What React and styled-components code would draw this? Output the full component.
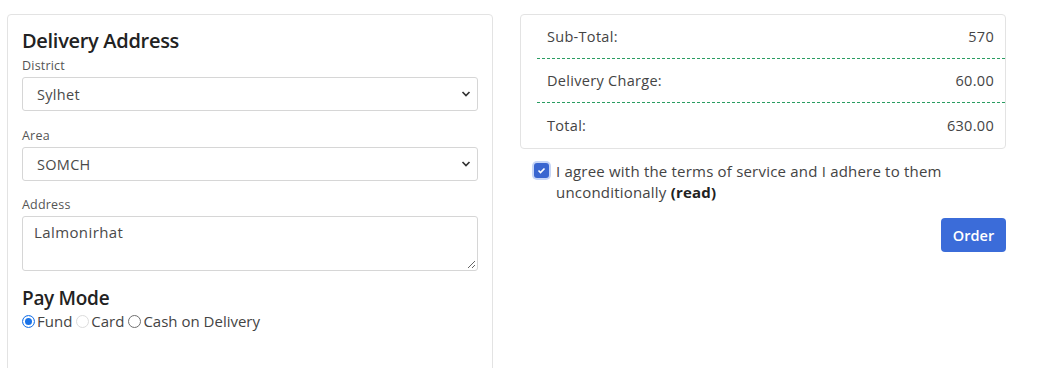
import React from "react";
import styled, { createGlobalStyle } from "styled-components";

const Global = createGlobalStyle`
  html, body { margin: 0; padding: 0; background: #fff; }
  body { font-family: "Open Sans", "Liberation Sans", sans-serif; color: #333; }
  * { box-sizing: border-box; }
`;

const Page = styled.div`
  display: flex;
  align-items: flex-start;
  gap: 27px;
  padding: 14px 0 0 7px;
  height: 368px;
  overflow: hidden;
`;

const Card = styled.div`
  width: 486px;
  border: 1px solid #e3e3e3;
  border-radius: 4px;
  background: #fff;
`;

const AddressCard = styled(Card)`
  padding: 12px 14px 40px 14px;
  min-height: 380px;
`;

const Heading = styled.h2`
  margin: 0;
  font-size: 20px;
  line-height: 28px;
  font-weight: 600;
  color: #222;
  letter-spacing: -0.3px;
`;

const Field = styled.div`
  display: flex;
  flex-direction: column;
  margin-bottom: ${(p) => p.$mb ?? 14}px;
`;

const Label = styled.label`
  font-size: 12.5px;
  line-height: 18px;
  color: #555;
  margin: 2px 0 2px;
  letter-spacing: 0.2px;
`;

const SelectBox = styled.div`
  position: relative;
  height: 34px;
  border: 1px solid #d6d6d6;
  border-radius: 3px;
  display: flex;
  align-items: center;
  padding: 0 14px;
  font-size: 14.5px;
  letter-spacing: 0.3px;
  color: #4a4a4a;
`;

const Chevron = styled.svg`
  position: absolute;
  right: 6px;
  top: 50%;
  transform: translateY(-50%);
`;

const TextArea = styled.div`
  position: relative;
  height: 55px;
  border: 1px solid #d6d6d6;
  border-radius: 3px;
  padding: 5px 11px;
  font-size: 15px;
  letter-spacing: 0.4px;
  color: #4a4a4a;
`;

const Grip = styled.svg`
  position: absolute;
  right: 1px;
  bottom: 1px;
`;

const PayHeading = styled(Heading)`
  font-size: 19px;
  line-height: 26px;
  margin-top: 14px;
`;

const RadioRow = styled.div`
  display: flex;
  align-items: center;
  font-size: 15px;
  color: #444;
  line-height: 20px;
`;

const RadioDot = styled.span`
  width: 13px;
  height: 13px;
  border-radius: 50%;
  margin: 0 2px 0 ${(p) => (p.$first ? 0 : 4)}px;
  flex: none;
  background: #fff;
  border: 1px solid ${(p) => (p.$checked ? "#1a73e8" : p.$disabled ? "#dcdcdc" : "#6f6f6f")};
  ${(p) => p.$checked && "box-shadow: inset 0 0 0 2px #fff, inset 0 0 0 6px #1a73e8;"}
`;

const RightCol = styled.div`
  width: 486px;
  display: flex;
  flex-direction: column;
`;

const SummaryCard = styled(Card)`
  padding: 0 0 0 16px;
`;

const Row = styled.div`
  display: flex;
  justify-content: space-between;
  height: ${(p) => (p.$last ? 45 : 44)}px;
  padding: 0 11px 0 10px;
  align-items: center;
  font-size: 14.5px;
  letter-spacing: 0.3px;
  color: #444;
  border-bottom: ${(p) => (p.$last ? "none" : "1px dashed #2a9d62")};
`;

const Agree = styled.div`
  display: flex;
  align-items: flex-start;
  margin: 12px 0 0 13px;
  font-size: 15px;
  line-height: 21px;
  letter-spacing: 0.2px;
  color: #444;
  width: 430px;
`;

const Check = styled.span`
  flex: none;
  width: 15px;
  height: 15px;
  border-radius: 3px;
  background: #3a66d0;
  box-shadow: 0 0 0 2px #c7d6f7;
  margin: 2px 7px 0 1px;
  display: flex;
  align-items: center;
  justify-content: center;
`;

const Bold = styled.b`
  font-weight: 700;
  color: #222;
`;

const Actions = styled.div`
  display: flex;
  justify-content: flex-end;
  margin-top: 15px;
`;

const Button = styled.button`
  width: 65px;
  height: 34px;
  border: none;
  border-radius: 4px;
  background: #3b6cd9;
  color: #fff;
  font-family: inherit;
  font-size: 14.5px;
  font-weight: 600;
`;

const ChevronIcon = () => (
  <Chevron width="10" height="7" viewBox="0 0 10 7">
    <path d="M1.5 1.5l3.5 3.5 3.5-3.5" fill="none" stroke="#333" strokeWidth="1.7" />
  </Chevron>
);

export default function App() {
  return (
    <>
      <Global />
      <Page>
        <AddressCard>
          <Heading>Delivery Address</Heading>
          <Field>
            <Label>District</Label>
            <SelectBox>
              Sylhet
              <ChevronIcon />
            </SelectBox>
          </Field>
          <Field $mb={13}>
            <Label>Area</Label>
            <SelectBox>
              SOMCH
              <ChevronIcon />
            </SelectBox>
          </Field>
          <Field $mb={0}>
            <Label>Address</Label>
            <TextArea>
              Lalmonirhat
              <Grip width="10" height="10" viewBox="0 0 10 10">
                <path d="M9 2L2 9M9 6L6 9" stroke="#666" strokeWidth="1" />
              </Grip>
            </TextArea>
          </Field>
          <PayHeading>Pay Mode</PayHeading>
          <RadioRow>
            <RadioDot $first $checked />Fund
            <RadioDot $disabled />Card
            <RadioDot />Cash on Delivery
          </RadioRow>
        </AddressCard>
        <RightCol>
          <SummaryCard>
            <Row><span>Sub-Total:</span><span>570</span></Row>
            <Row><span>Delivery Charge:</span><span>60.00</span></Row>
            <Row $last><span>Total:</span><span>630.00</span></Row>
          </SummaryCard>
          <Agree>
            <Check>
              <svg width="9" height="7" viewBox="0 0 9 7">
                <path d="M1.5 3.5l2 2 4-4" fill="none" stroke="#fff" strokeWidth="1.6" />
              </svg>
            </Check>
            <span>
              I agree with the terms of service and I adhere to them unconditionally <Bold>(read)</Bold>
            </span>
          </Agree>
          <Actions>
            <Button>Order</Button>
          </Actions>
        </RightCol>
      </Page>
    </>
  );
}
